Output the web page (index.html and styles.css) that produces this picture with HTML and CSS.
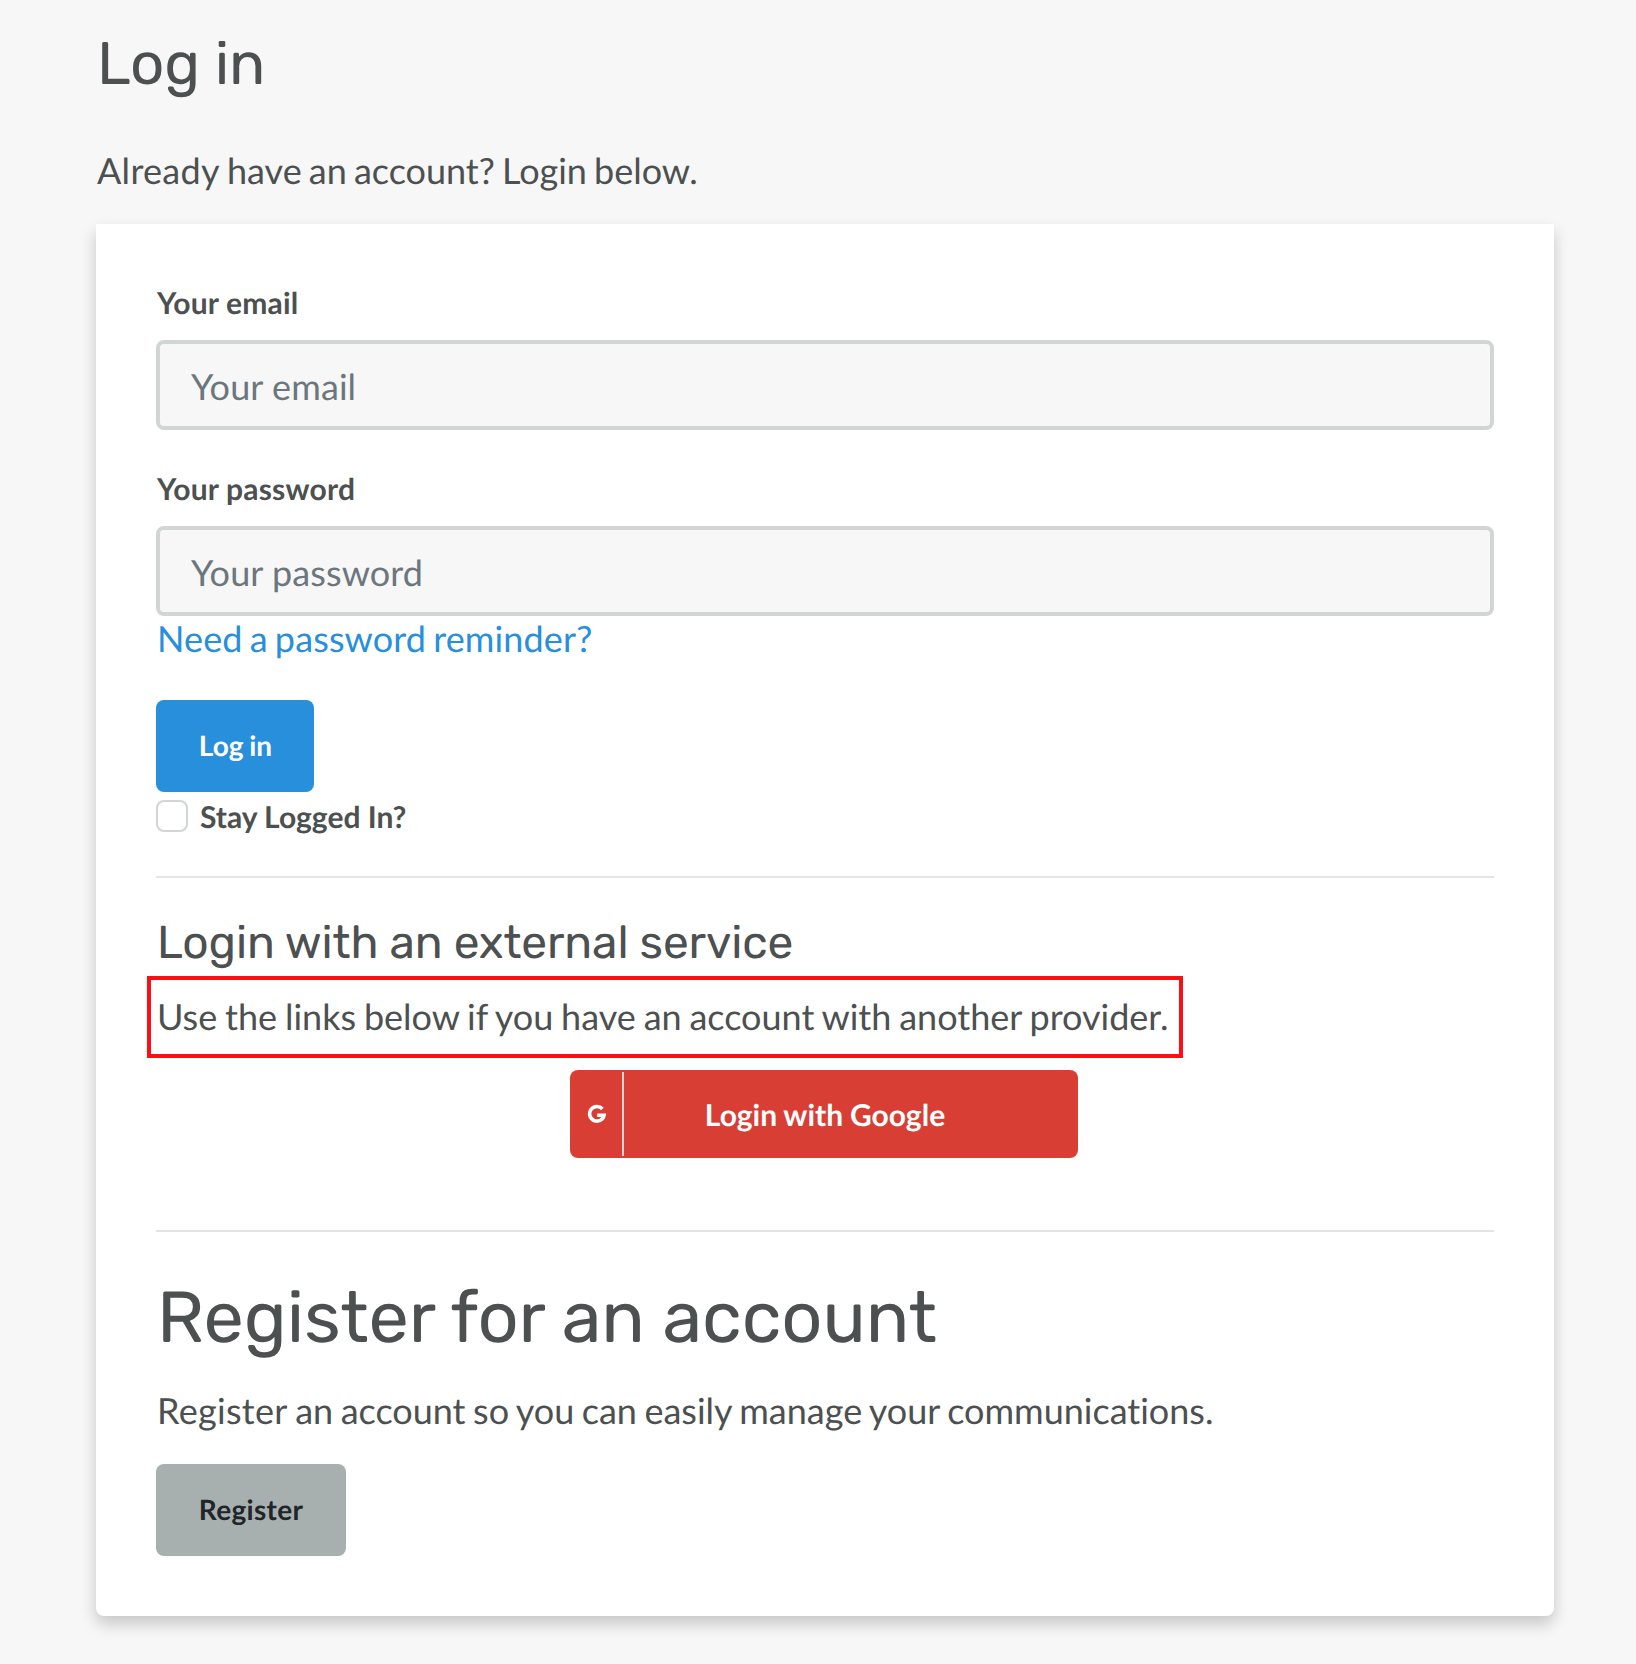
FILE: index.html
```html
<!DOCTYPE html>
<html lang="en">
<head>
<meta charset="utf-8">
<title>Log in</title>
<link rel="stylesheet" href="styles.css">
</head>
<body>
<main class="page">
  <h1 class="heading heading-page">Log in</h1>
  <p class="text intro"><span class="lead">Already</span> have an account? Login below.</p>
  <section class="card">
    <form class="form">
      <label class="label" for="email">Your email</label>
      <input class="input" id="email" type="email" placeholder="Your email">
      <label class="label label-next" for="password">Your password</label>
      <input class="input" id="password" type="password" placeholder="Your password">
      <a class="link" href="#">Need a password reminder?</a>
      <button class="button button-primary" type="button">Log in</button>
      <label class="check"><input class="checkbox" type="checkbox"><span>Stay Logged In?</span></label>
    </form>
    <hr class="rule rule-first">
    <h2 class="heading heading-external">Login with an external service</h2>
    <p class="text provider">Use the links below if you have an account with another provider.<span class="highlight"></span></p>
    <a class="google" href="#">
      <span class="google-icon">
        <svg width="20" height="20" viewBox="0 0 20 20" fill="none" stroke="#fff" stroke-width="3.6"><path d="M15.4 5A7.3 7.3 0 1 0 17.1 11.2H10.2"/></svg>
      </span>
      <span class="google-text">Login with Google</span>
    </a>
    <hr class="rule rule-second">
    <h1 class="heading heading-register">Register for an account</h1>
    <p class="text register-text"><span class="lead">Register</span> an account so you can easily manage your communications.</p>
    <button class="button button-secondary" type="button">Register</button>
  </section>
</main>
</body>
</html>
```
FILE: styles.css
```css
* { box-sizing: border-box; }
body {
  margin: 0;
  min-height: 1664px;
  background: #f7f7f7;
  color: #4c5050;
  font-family: Lato, sans-serif;
  font-size: 36px;
  text-rendering: geometricPrecision;
  font-variant-ligatures: none;
}
.page { padding: 29px 82px 48px 96px; }
.heading {
  margin: 0;
  padding-left: 1px;
  font-family: Rubik, Roboto, sans-serif;
  font-weight: 400;
  letter-spacing: -.12px;
  white-space: nowrap;
}
.heading-page { font-size: 60px; line-height: 70px; }
.heading-external { margin-top: 38px; font-size: 46px; line-height: 54px; }
.heading-register { margin-top: 44px; font-size: 72px; line-height: 84px; }
.text { margin: 0; padding-left: 1px; line-height: 54px; white-space: nowrap; }
.intro { margin: 44px 0 27px; word-spacing: -2.1px; }
.lead { letter-spacing: .3px; }
.card {
  padding: 60px;
  height: 1392px;
  background: #fff;
  border-radius: 0 0 8px 8px;
  box-shadow: 0 8px 16px rgba(0, 0, 0, .2);
}
.form { display: flex; flex-direction: column; align-items: flex-start; }
.label {
  margin-bottom: 18px;
  padding-left: 1px;
  font-size: 30px;
  font-weight: 700;
  line-height: 38px;
  letter-spacing: .2px;
}
.label-next { margin-top: 40px; }
.input {
  width: 100%;
  height: 90px;
  padding: 2px 31px 0;
  border: 4px solid #d1d6d5;
  border-radius: 8px;
  background: #f7f7f7;
  font: 36px Lato, sans-serif;
  letter-spacing: .1px;
  text-rendering: inherit;
}
.input::placeholder { color: #6c767d; opacity: 1; }
.link {
  padding-left: 1px;
  color: #278fdb;
  line-height: 44px;
  letter-spacing: .12px;
  word-spacing: -2.2px;
  text-decoration: none;
}
.button {
  height: 92px;
  padding: 0 0 2px;
  border: 0;
  border-radius: 8px;
  font: 700 28px Lato, sans-serif;
  text-rendering: inherit;
}
.button-primary { width: 158px; margin-top: 40px; padding-left: 1px; background: #278fdb; color: #fff; word-spacing: -1px; }
.button-secondary { display: block; width: 190px; background: #a8b0af; color: #212529; letter-spacing: .3px; }
.check {
  display: flex;
  align-items: center;
  gap: 12px;
  height: 36px;
  margin-top: 6px;
  font-size: 30px;
  font-weight: 700;
  line-height: 36px;
}
.check span { padding-top: 2px; }
.checkbox {
  appearance: none;
  width: 32px;
  height: 32px;
  margin: 0;
  border: 2px solid #d1d6d5;
  border-radius: 8px;
}
.rule { height: 2px; margin: 0; border: 0; background: #e4e4e4; }
.rule-first { margin-top: 42px; }
.rule-second { margin-top: 72px; }
.provider { position: relative; margin-top: 19px; word-spacing: -1.35px; }
.highlight {
  position: absolute;
  left: -9px;
  top: -13px;
  width: 1036px;
  height: 82px;
  border: 4px solid #ff0d14;
}
.google {
  display: flex;
  width: 508px;
  height: 88px;
  margin: 27px auto 0 414px;
  padding: 2px;
  border-radius: 8px;
  background: #d93e34;
  color: #fff;
  text-decoration: none;
}
.google-icon {
  display: flex;
  align-items: center;
  justify-content: center;
  width: 52px;
  border-right: 2px solid #d1d6d5;
}
.google-text {
  flex: 1;
  padding-right: 50px;
  text-align: center;
  font-size: 30px;
  font-weight: 700;
  line-height: 86px;
  word-spacing: -.5px;
}
.register-text { margin: 23px 0 27px; word-spacing: -1.7px; }
```
